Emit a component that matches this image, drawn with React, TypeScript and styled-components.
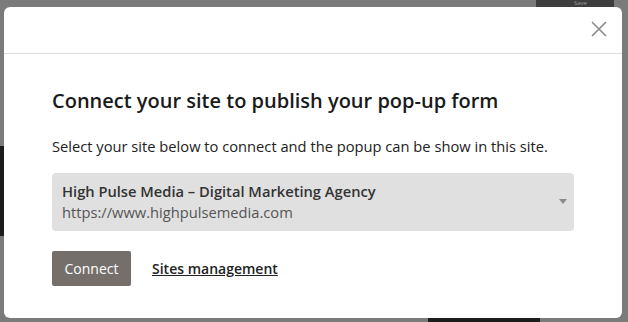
import React from 'react';
import styled, { createGlobalStyle } from 'styled-components';

const GlobalStyle = createGlobalStyle`
  html, body {
    margin: 0;
    padding: 0;
    width: 628px;
    height: 322px;
    overflow: hidden;
    font-family: "Open Sans", "Liberation Sans", sans-serif;
  }
`;

const App = () => {
    return (
        <>
            <GlobalStyle />
            <Backdrop>
                <BehindSave>Save</BehindSave>
                <BehindDark />
                <BehindBottom />
                <Modal>
                    <Header>
                        <CloseButton aria-label="Close">
                            <svg width="16" height="16" viewBox="0 0 16 16">
                                <path d="M1 1 L15 15 M15 1 L1 15" stroke="#8a8a8a" strokeWidth="1.6" fill="none" />
                            </svg>
                        </CloseButton>
                    </Header>
                    <Body>
                        <Title>Connect your site to publish your pop-up form</Title>
                        <Description>Select your site below to connect and the popup can be show in this site.</Description>
                        <Select>
                            <SiteName>High Pulse Media – Digital Marketing Agency</SiteName>
                            <SiteUrl>https://www.highpulsemedia.com</SiteUrl>
                            <Caret />
                        </Select>
                        <Actions>
                            <ConnectButton>Connect</ConnectButton>
                            <ManageLink href="#">Sites management</ManageLink>
                        </Actions>
                    </Body>
                </Modal>
            </Backdrop>
        </>
    )
}
export default App;

const Backdrop = styled.div`
  position: relative;
  width: 628px;
  height: 322px;
  background: #7b7b7b;
  padding: 7px 6px 4px 4px;
  box-sizing: border-box;
`;

const BehindSave = styled.div`
  position: absolute;
  top: 0;
  left: 536px;
  width: 78px;
  height: 8px;
  background: #3e3e3e;
  color: #9a9a9a;
  font-size: 6px;
  line-height: 7px;
  padding-left: 38px;
  box-sizing: border-box;
`;

const BehindDark = styled.div`
  position: absolute;
  top: 146px;
  left: 0;
  width: 6px;
  height: 90px;
  background: #1c1c1c;
`;

const BehindBottom = styled.div`
  position: absolute;
  top: 318px;
  left: 428px;
  width: 112px;
  height: 4px;
  background: #1c1c1c;
`;

const Modal = styled.div`
  position: relative;
  width: 618px;
  height: 311px;
  background: #fff;
  border-radius: 6px;
  display: flex;
  flex-direction: column;
`;

const Header = styled.div`
  height: 47px;
  border-bottom: 1px solid #dedede;
  display: flex;
  justify-content: flex-end;
  align-items: center;
  padding-right: 14px;
  box-sizing: border-box;
`;

const CloseButton = styled.button`
  border: none;
  background: none;
  padding: 0;
  width: 18px;
  height: 18px;
  display: flex;
  align-items: center;
  justify-content: center;
  margin-top: -2px;
`;

const Body = styled.div`
  padding: 34px 48px 0;
`;

const Title = styled.h2`
  margin: 0;
  font-size: 20px;
  font-weight: 600;
  color: #1a1a1a;
  line-height: 26px;
`;

const Description = styled.p`
  margin: 22px 0 0;
  font-size: 14.7px;
  color: #222;
  line-height: 20px;
`;

const Select = styled.div`
  position: relative;
  margin-top: 17px;
  width: 522px;
  height: 58px;
  background: #e0e0e0;
  border-radius: 4px;
  padding: 8px 10px;
  box-sizing: border-box;
  display: flex;
  flex-direction: column;
`;

const SiteName = styled.div`
  font-size: 14.7px;
  font-weight: 600;
  color: #333;
  line-height: 21px;
`;

const SiteUrl = styled.div`
  font-size: 14.7px;
  color: #555;
  line-height: 21px;
`;

const Caret = styled.span`
  position: absolute;
  right: 7px;
  top: 26px;
  width: 0;
  height: 0;
  border-left: 4px solid transparent;
  border-right: 4px solid transparent;
  border-top: 5px solid #8a8a8a;
`;

const Actions = styled.div`
  display: flex;
  align-items: center;
  gap: 21px;
  margin-top: 20px;
`;

const ConnectButton = styled.button`
  height: 35px;
  width: 79px;
  background: #746f6a;
  color: #fff;
  border: none;
  border-radius: 2px;
  font-family: "Open Sans", "Liberation Sans", sans-serif;
  font-size: 14px;
  padding: 0;
`;

const ManageLink = styled.a`
  font-size: 14px;
  font-weight: 600;
  color: #222;
  text-decoration: underline;
`;
